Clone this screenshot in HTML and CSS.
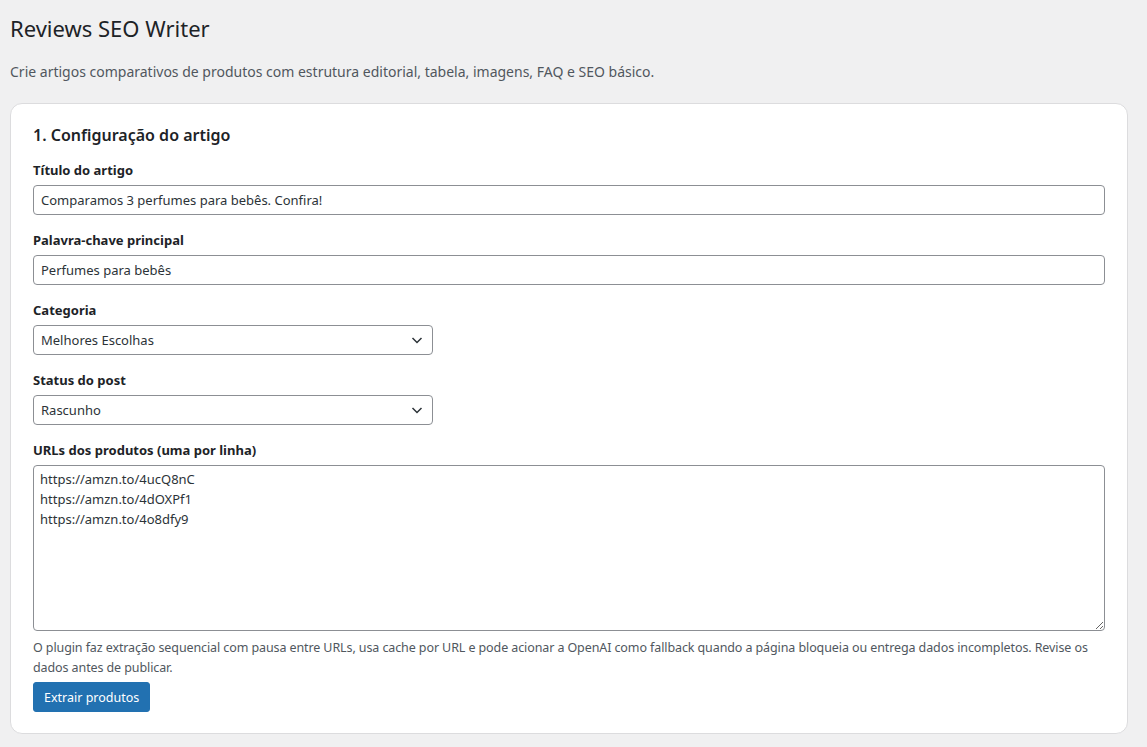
FILE: index.html
```html
<!DOCTYPE html>
<html lang="pt-BR">
<head>
    <meta charset="UTF-8">
    <meta name="viewport" content="width=device-width, initial-scale=1.0">
    <title>Reviews SEO Writer</title>
    <link rel="stylesheet" href="styles.css">
</head>
<body>
    <div class="wrap">
        <h1>Reviews SEO Writer</h1>
        <p class="intro">Crie artigos comparativos de produtos com estrutura editorial, tabela, imagens, FAQ e SEO básico.</p>

        <div class="card">
            <h2>1. Configuração do artigo</h2>

            <div class="field">
                <label for="title">Título do artigo</label>
                <input type="text" id="title" class="text-input" value="Comparamos 3 perfumes para bebês. Confira!">
            </div>

            <div class="field">
                <label for="keyword">Palavra-chave principal</label>
                <input type="text" id="keyword" class="text-input" value="Perfumes para bebês">
            </div>

            <div class="field">
                <label for="category">Categoria</label>
                <div class="select-wrap">
                    <select id="category">
                        <option>Melhores Escolhas</option>
                    </select>
                    <svg class="chevron" width="16" height="16" viewBox="0 0 16 16"><path d="M3.5 6 8 10.5 12.5 6" fill="none" stroke="#2c3338" stroke-width="1.5"/></svg>
                </div>
            </div>

            <div class="field">
                <label for="status">Status do post</label>
                <div class="select-wrap">
                    <select id="status">
                        <option>Rascunho</option>
                    </select>
                    <svg class="chevron" width="16" height="16" viewBox="0 0 16 16"><path d="M3.5 6 8 10.5 12.5 6" fill="none" stroke="#2c3338" stroke-width="1.5"/></svg>
                </div>
            </div>

            <div class="field last">
                <label for="urls">URLs dos produtos (uma por linha)</label>
                <textarea id="urls" rows="8">https://amzn.to/4ucQ8nC
https://amzn.to/4dOXPf1
https://amzn.to/4o8dfy9</textarea>
                <p class="help">O plugin faz extração sequencial com pausa entre URLs, usa cache por URL e pode acionar a OpenAI como fallback quando a página bloqueia ou entrega dados incompletos. Revise os dados antes de publicar.</p>
            </div>

            <button class="button-primary">Extrair produtos</button>
        </div>
    </div>
</body>
</html>
```

FILE: styles.css
```css
body {
    margin: 0;
    background: #f0f0f1;
    color: #3c434a;
    font-family: "Noto Sans", "Open Sans", sans-serif;
    font-size: 13px;
}
.wrap {
    padding: 0 19px 0 10px;
}
h1 {
    margin: 0;
    padding: 13px 0 0 0;
    font-size: 22px;
    font-weight: 400;
    line-height: 30px;
    color: #1d2327;
}
.intro {
    margin: 19px 0 21px 0;
    font-size: 14px;
    line-height: 20px;
    color: #50575e;
}
.card {
    background: #fff;
    border: 1px solid #dcdcde;
    border-radius: 12px;
    padding: 19px 22px 21px 22px;
}
h2 {
    margin: 0 0 14px 0;
    font-size: 16px;
    font-weight: 600;
    line-height: 24px;
    color: #1d2327;
}
.field {
    margin-bottom: 16px;
}
.field.last {
    margin-bottom: 4px;
}
label {
    display: block;
    margin-bottom: 6px;
    font-weight: 700;
    line-height: 18px;
    color: #1d2327;
}
.text-input,
select,
textarea {
    box-sizing: border-box;
    border: 1px solid #8c8f94;
    border-radius: 4px;
    background: #fff;
    color: #2c3338;
    font-family: inherit;
    font-size: 13px;
}
.text-input {
    display: block;
    width: 100%;
    height: 30px;
    padding: 0 7px;
}
.select-wrap {
    position: relative;
    width: 400px;
}
select {
    display: block;
    width: 100%;
    height: 30px;
    padding: 0 24px 0 7px;
    appearance: none;
    -webkit-appearance: none;
}
.chevron {
    position: absolute;
    right: 8px;
    top: 7px;
    pointer-events: none;
}
textarea {
    display: block;
    width: 100%;
    height: 166px;
    padding: 3px 6px;
    line-height: 20px;
    resize: vertical;
}
.help {
    margin: 7px 0 0 0;
    font-size: 12.5px;
    letter-spacing: -0.1px;
    line-height: 20px;
    color: #50575e;
}
.button-primary {
    height: 30px;
    padding: 0 10px;
    border: 1px solid #2271b1;
    border-radius: 3px;
    background: #2271b1;
    color: #fff;
    font-family: inherit;
    font-size: 12.5px;
}
```
